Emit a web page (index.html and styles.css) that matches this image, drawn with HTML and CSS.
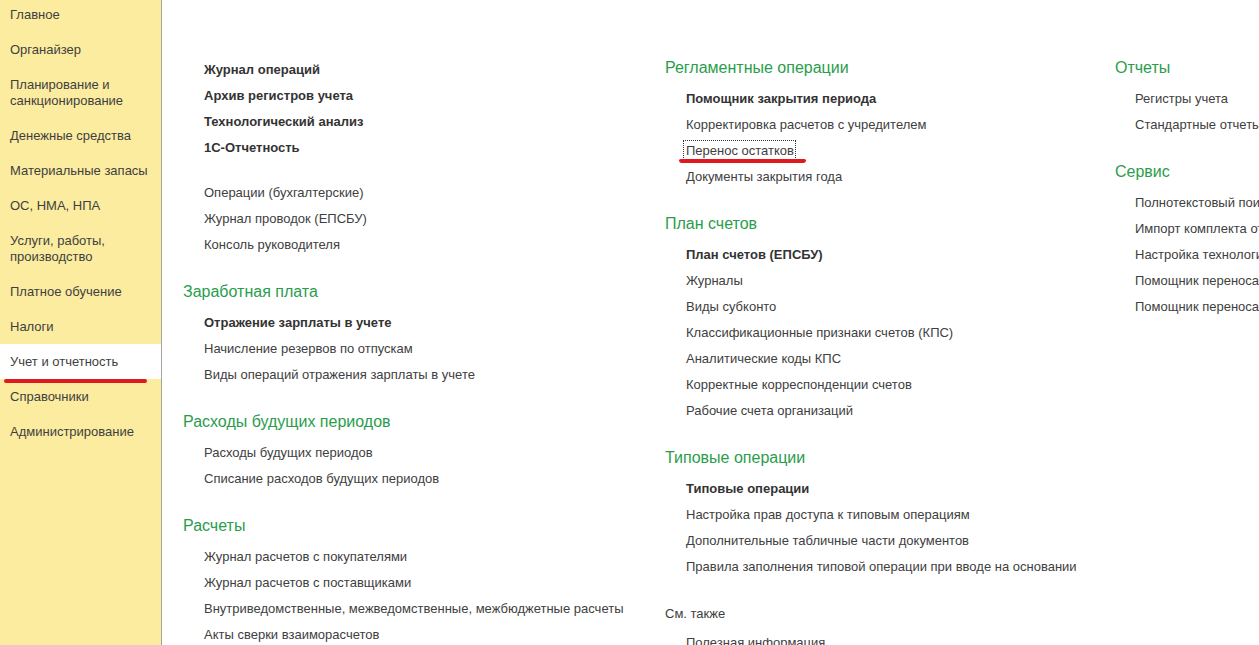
FILE: index.html
```html
<!DOCTYPE html>
<html lang="ru">
<head>
<meta charset="utf-8">
<title>Учет и отчетность</title>
<link rel="stylesheet" href="styles.css">
</head>
<body>
<div class="app">
  <nav class="sidebar">
    <div class="nav-item">Главное</div>
    <div class="nav-item">Органайзер</div>
    <div class="nav-item">Планирование и<br>санкционирование</div>
    <div class="nav-item">Денежные средства</div>
    <div class="nav-item">Материальные запасы</div>
    <div class="nav-item">ОС, НМА, НПА</div>
    <div class="nav-item">Услуги, работы,<br>производство</div>
    <div class="nav-item">Платное обучение</div>
    <div class="nav-item">Налоги</div>
    <div class="nav-item active">Учет и отчетность<span class="mark mark-nav"></span></div>
    <div class="nav-item">Справочники</div>
    <div class="nav-item">Администрирование</div>
  </nav>
  <main class="content">
    <section class="col col-left">
      <div class="group">
        <div class="item bold">Журнал операций</div>
        <div class="item bold">Архив регистров учета</div>
        <div class="item bold">Технологический анализ</div>
        <div class="item bold">1С-Отчетность</div>
      </div>
      <div class="group group-plain">
        <div class="item">Операции (бухгалтерские)</div>
        <div class="item">Журнал проводок (ЕПСБУ)</div>
        <div class="item">Консоль руководителя</div>
      </div>
      <div class="group">
        <h2 class="heading">Заработная плата</h2>
        <div class="item bold">Отражение зарплаты в учете</div>
        <div class="item">Начисление резервов по отпускам</div>
        <div class="item">Виды операций отражения зарплаты в учете</div>
      </div>
      <div class="group">
        <h2 class="heading">Расходы будущих периодов</h2>
        <div class="item">Расходы будущих периодов</div>
        <div class="item">Списание расходов будущих периодов</div>
      </div>
      <div class="group">
        <h2 class="heading">Расчеты</h2>
        <div class="item">Журнал расчетов с покупателями</div>
        <div class="item">Журнал расчетов с поставщиками</div>
        <div class="item">Внутриведомственные, межведомственные, межбюджетные расчеты</div>
        <div class="item">Акты сверки взаиморасчетов</div>
      </div>
    </section>
    <section class="col col-mid">
      <div class="group">
        <h2 class="heading">Регламентные операции</h2>
        <div class="item bold">Помощник закрытия периода</div>
        <div class="item">Корректировка расчетов с учредителем</div>
        <div class="item"><span class="focused">Перенос остатков<span class="mark mark-link"></span></span></div>
        <div class="item">Документы закрытия года</div>
      </div>
      <div class="group">
        <h2 class="heading">План счетов</h2>
        <div class="item bold">План счетов (ЕПСБУ)</div>
        <div class="item">Журналы</div>
        <div class="item">Виды субконто</div>
        <div class="item">Классификационные признаки счетов (КПС)</div>
        <div class="item">Аналитические коды КПС</div>
        <div class="item">Корректные корреспонденции счетов</div>
        <div class="item">Рабочие счета организаций</div>
      </div>
      <div class="group">
        <h2 class="heading">Типовые операции</h2>
        <div class="item bold">Типовые операции</div>
        <div class="item">Настройка прав доступа к типовым операциям</div>
        <div class="item">Дополнительные табличные части документов</div>
        <div class="item">Правила заполнения типовой операции при вводе на основании</div>
      </div>
      <div class="group">
        <h2 class="heading heading-plain">См. также</h2>
        <div class="item">Полезная информация</div>
      </div>
    </section>
    <section class="col col-right">
      <div class="group">
        <h2 class="heading">Отчеты</h2>
        <div class="item">Регистры учета</div>
        <div class="item">Стандартные отчеты</div>
      </div>
      <div class="group">
        <h2 class="heading">Сервис</h2>
        <div class="item">Полнотекстовый поиск</div>
        <div class="item">Импорт комплекта отчетности</div>
        <div class="item">Настройка технологического журнала</div>
        <div class="item">Помощник переноса данных</div>
        <div class="item">Помощник переноса настроек</div>
      </div>
    </section>
  </main>
</div>
</body>
</html>
```
FILE: styles.css
```css
* { box-sizing: border-box; }
html, body {
  margin: 0;
  padding: 0;
  height: 100%;
  overflow: hidden;
  background: #ffffff;
}
body {
  font-family: Arial, "Liberation Sans", sans-serif;
  font-size: 13px;
  color: #404040;
}
.app {
  display: flex;
  height: 645px;
  width: 1259px;
  overflow: hidden;
}
.sidebar {
  flex: 0 0 162px;
  background: #fbec9f;
  border-right: 1px solid #a3a3a3;
  display: flex;
  flex-direction: column;
}
.nav-item {
  position: relative;
  padding: 10px 10px 9px;
  line-height: 16px;
  color: #3f3f3f;
  white-space: nowrap;
}
.nav-item:first-child {
  padding-top: 7px;
}
.nav-item.active {
  background: #ffffff;
}
.mark {
  position: absolute;
  background: #e0191e;
  border-radius: 3px;
  pointer-events: none;
}
.mark-nav {
  left: 4px;
  width: 143px;
  bottom: -4px;
  height: 4px;
}
.content {
  flex: 1 1 auto;
  display: grid;
  grid-template-columns: 482px 450px 300px;
  padding: 57px 0 0 21px;
  align-items: start;
  min-width: 0;
}
.col {
  display: flex;
  flex-direction: column;
  gap: 23px;
  white-space: nowrap;
  min-width: 0;
}
.group {
  display: flex;
  flex-direction: column;
}
.group-plain {
  margin-top: -4px;
}
.heading {
  margin: 0 0 7px;
  font-size: 16px;
  font-weight: normal;
  line-height: 22px;
  color: #2a9d4c;
}
.heading-plain {
  font-size: 13px;
  color: #404040;
  margin-bottom: 5px;
}
.item {
  padding-left: 21px;
  line-height: 26px;
  color: #404040;
}
.item.bold {
  font-weight: bold;
  color: #333333;
}
.col-right .item {
  padding-left: 20px;
}
.focused {
  position: relative;
  outline: 1px dotted #333;
  outline-offset: 0;
  padding: 2px 1px 1px 0;
  margin-left: -2px;
  padding-left: 2px;
}
.mark-link {
  left: -5px;
  right: -11px;
  bottom: -4px;
  height: 4px;
  border-radius: 2px 2px 3px 3px;
}
```
